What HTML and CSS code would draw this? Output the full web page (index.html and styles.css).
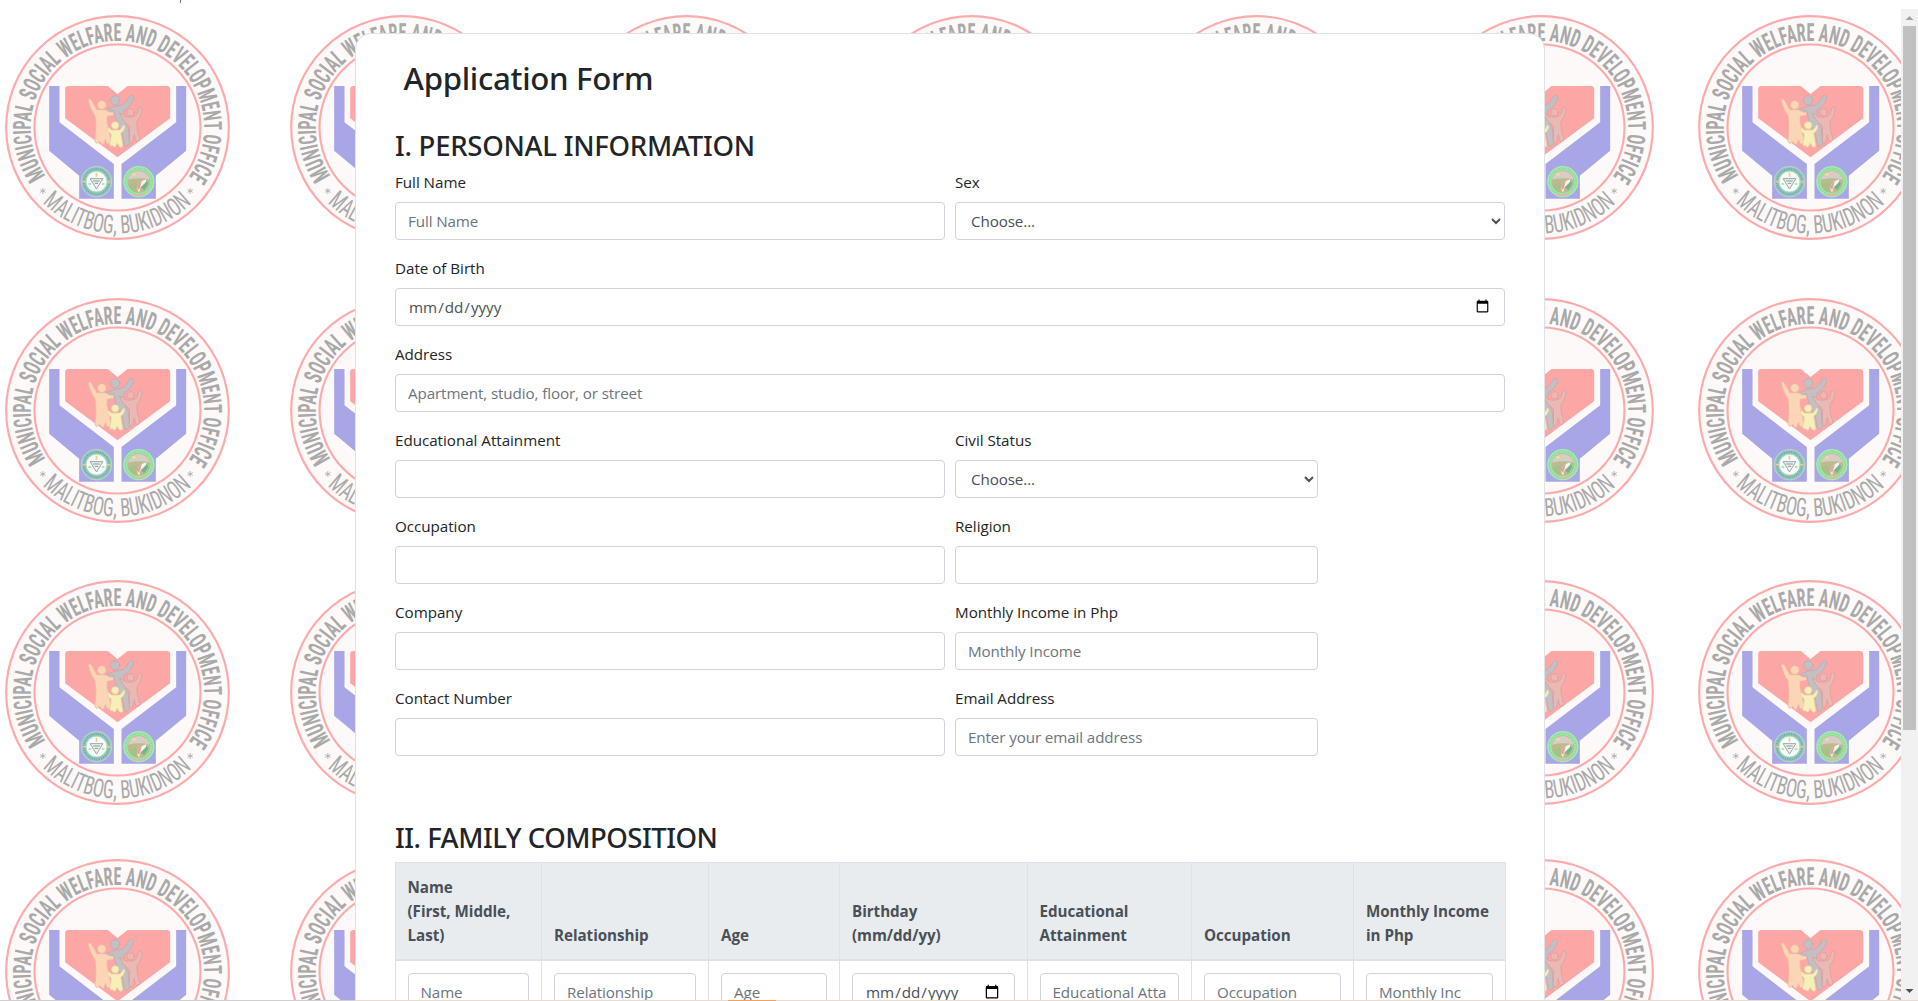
FILE: index.html
```html
<!DOCTYPE html>
<html lang="en">
<head>
<meta charset="utf-8">
<title>Application Form</title>
<link rel="stylesheet" href="styles.css">
</head>
<body>
<svg class="defs" width="0" height="0" aria-hidden="true">
  <defs>
    <path id="arc-top" d="M136.4 527.9 A260 260 0 1 1 566 530"/>
    <path id="arc-bottom" d="M127 608 A320 320 0 0 0 577 608"/>
    <symbol id="seal" viewBox="14.5 45 675 675">
      <circle cx="352" cy="382.5" r="334" fill="#fdf9f8" stroke="#fcabac" stroke-width="6.5"/>
      <circle cx="352" cy="382.5" r="249" fill="none" stroke="#fcabac" stroke-width="6.5"/>
      <text class="seal-office"><textPath href="#arc-top" textLength="1128" lengthAdjust="spacingAndGlyphs">MUNICIPAL SOCIAL WELFARE AND DEVELOPMENT OFFICE</textPath></text>
      <text class="seal-town"><textPath href="#arc-bottom" textLength="496" lengthAdjust="spacingAndGlyphs">MALITBOG, BUKIDNON</textPath></text>
      <g stroke="#a9a9a9" stroke-width="2.5">
        <path d="M128 564v18M120 569l16 8M120 577l16-8M570 564v18M562 569l16 8M562 577l16-8"/>
      </g>
      <path fill="#a8a6e6" d="M147 258h31v109l163 125v104H237v-69l-90-75zM528 258h30v194l-91 75v69H364V492l164-125z"/>
      <path fill="#fda6a6" d="M205 258H323L352 282 382 258H500q10 0 10 10V355L352 472 195 355V268q0-10 10-10z"/>
      <g stroke-width="2" stroke-linecap="round" stroke-linejoin="round">
        <g fill="#c3bfc3" stroke="#b5abaf">
          <path d="M312 330C330 328 338 318 352 317 368 318 378 308 387 290 391 284 401 286 400 293 397 310 386 322 372 330 368 350 376 370 384 385L388 430Q384 442 374 438L366 400 350 370 340 332Q326 336 312 330z"/>
          <circle cx="345" cy="301" r="14"/>
        </g>
        <g fill="#fbd5b5" stroke="#e8bb9e">
          <path d="M264 299Q272 293 277 306L290 329H316Q328 338 340 337V346L321 349Q318 366 325 385L333 424Q328 436 320 430L316 418 312 430Q306 438 302 428L298 424Q288 438 284 422 290 392 285 348 270 328 264 299z"/>
          <circle cx="305" cy="315" r="13"/>
        </g>
        <g fill="#e9bab5" stroke="#d99b96">
          <path d="M359 340Q367 340 374 350 388 354 400 350 412 348 414 328 416 320 422 321 427 324 424 338 420 356 410 366 409 390 419 416 416 428 408 424L402 404 398 424Q392 434 388 424V378Q366 362 359 340z"/>
          <circle cx="391" cy="337" r="11"/>
        </g>
        <g fill="#f6efb8" stroke="#e2d5a0">
          <path d="M321 383Q328 382 334 390H358Q366 386 369 376 375 374 374 382 371 394 362 400L368 438Q362 446 356 438L351 430 346 440Q338 444 337 436 328 442 329 430 334 412 333 402 322 394 321 383z"/>
          <circle cx="345" cy="376" r="11"/>
        </g>
      </g>
      <circle cx="289" cy="545" r="46" fill="#93c6c0" stroke="#d3dfc4" stroke-width="2"/>
      <circle cx="289" cy="545" r="38" fill="none" stroke="#76aca9" stroke-width="6" stroke-dasharray="4 3"/>
      <circle cx="289" cy="545" r="31" fill="#f5fbf8" stroke="#b4d9bd" stroke-width="2"/>
      <path d="M270 536h38l-19 31z" fill="#f0f3f1" stroke="#9aa5a3" stroke-width="3"/>
      <path d="M279 543h20M284 550h10" stroke="#87948f" stroke-width="3"/>
      <path d="M289 518v12M247 545h10M321 545h10" stroke="#edcf80" stroke-width="5"/>
      <path d="M265 552h8M305 552h8" stroke="#a6dba0" stroke-width="5"/>
      <circle cx="416" cy="545" r="46" fill="#9be8a8" stroke="#b4eeba" stroke-width="2"/>
      <circle cx="416" cy="545" r="40" fill="none" stroke="#88d597" stroke-width="5" stroke-dasharray="3 4"/>
      <circle cx="416" cy="545" r="34" fill="#bdb991"/>
      <path d="M383 539a34 34 0 0 1 66 0q-32-8-66 0z" fill="#d6cec5"/>
      <circle cx="401" cy="523" r="5" fill="#fbd79c"/>
      <path d="M385 556q14-14 28-2l-6 22q-16-4-22-20z" fill="#a8bf86"/>
      <path d="M411 566q0-20 28-28l-4 16-14 8-4 16z" fill="#f7f3ef"/>
      <path d="M411 564q2-14 14-20l-8 26z" fill="#ee9c95"/>
      <path d="M422 562l18-18 4 8-12 18z" fill="#69b98a"/>
      <path d="M396 582q20 8 40-2" fill="none" stroke="#e8b3a0" stroke-width="4"/>
    </symbol>
  </defs>
</svg>

<div class="window">
  <main class="page">
    <div class="backdrop" aria-hidden="true">
      <svg><use href="#seal"/></svg><svg><use href="#seal"/></svg><svg><use href="#seal"/></svg><svg><use href="#seal"/></svg><svg><use href="#seal"/></svg><svg><use href="#seal"/></svg><svg><use href="#seal"/></svg>
      <svg><use href="#seal"/></svg><svg><use href="#seal"/></svg><svg><use href="#seal"/></svg><svg><use href="#seal"/></svg><svg><use href="#seal"/></svg><svg><use href="#seal"/></svg><svg><use href="#seal"/></svg>
      <svg><use href="#seal"/></svg><svg><use href="#seal"/></svg><svg><use href="#seal"/></svg><svg><use href="#seal"/></svg><svg><use href="#seal"/></svg><svg><use href="#seal"/></svg><svg><use href="#seal"/></svg>
      <svg><use href="#seal"/></svg><svg><use href="#seal"/></svg><svg><use href="#seal"/></svg><svg><use href="#seal"/></svg><svg><use href="#seal"/></svg><svg><use href="#seal"/></svg><svg><use href="#seal"/></svg>
    </div>
    <span class="tick"></span>

    <form class="card">
      <h2 class="title">Application Form</h2>

      <h3 class="section section-personal">I. PERSONAL INFORMATION</h3>
      <div class="row">
        <div class="field half"><label for="name">Full Name</label><input class="control" id="name" type="text" placeholder="Full Name"></div>
        <div class="field half"><label for="sex">Sex</label><select class="control" id="sex"><option>Choose...</option></select></div>
      </div>
      <div class="row">
        <div class="field full"><label for="dob">Date of Birth</label><input class="control" id="dob" type="date"></div>
      </div>
      <div class="row">
        <div class="field full"><label for="address">Address</label><input class="control" id="address" type="text" placeholder="Apartment, studio, floor, or street"></div>
      </div>
      <div class="row">
        <div class="field half"><label for="education">Educational Attainment</label><input class="control" id="education" type="text"></div>
        <div class="field third"><label for="civil">Civil Status</label><select class="control" id="civil"><option>Choose...</option></select></div>
      </div>
      <div class="row">
        <div class="field half"><label for="occupation">Occupation</label><input class="control" id="occupation" type="text"></div>
        <div class="field third"><label for="religion">Religion</label><input class="control" id="religion" type="text"></div>
      </div>
      <div class="row">
        <div class="field half"><label for="company">Company</label><input class="control" id="company" type="text"></div>
        <div class="field third"><label for="income">Monthly Income in Php</label><input class="control" id="income" type="text" placeholder="Monthly Income"></div>
      </div>
      <div class="row">
        <div class="field half"><label for="contact">Contact Number</label><input class="control" id="contact" type="text"></div>
        <div class="field third"><label for="email">Email Address</label><input class="control" id="email" type="email" placeholder="Enter your email address"></div>
      </div>

      <h3 class="section section-family">II. FAMILY COMPOSITION</h3>
      <table class="family">
        <colgroup>
          <col class="col-name"><col class="col-relationship"><col class="col-age"><col class="col-birthday"><col class="col-education"><col class="col-occupation"><col class="col-income">
        </colgroup>
        <thead>
          <tr>
            <th>Name<br>(First, Middle, Last)</th>
            <th>Relationship</th>
            <th>Age</th>
            <th>Birthday<br>(mm/dd/yy)</th>
            <th>Educational<br>Attainment</th>
            <th>Occupation</th>
            <th>Monthly Income<br>in Php</th>
          </tr>
        </thead>
        <tbody>
          <tr>
            <td><input class="control" type="text" placeholder="Name"></td>
            <td><input class="control" type="text" placeholder="Relationship"></td>
            <td><input class="control" type="text" placeholder="Age"></td>
            <td><input class="control" type="date"></td>
            <td><input class="control" type="text" placeholder="Educational Attainment"></td>
            <td><input class="control" type="text" placeholder="Occupation"></td>
            <td><input class="control" type="text" placeholder="Monthly Inc"></td>
          </tr>
        </tbody>
      </table>
    </form>
  </main>

  <div class="scrollbar" aria-hidden="true">
    <svg class="arrow" viewBox="0 0 17 17"><path d="M4.500 11h8l-4-4z" fill="#a3a3a3"/></svg>
    <div class="thumb"></div>
    <svg class="arrow arrow-down" viewBox="0 0 17 17"><path d="M4.500 6h8l-4 4z" fill="#505050"/></svg>
  </div>
  <div class="edge" aria-hidden="true"></div>
</div>
</body>
</html>
```
FILE: styles.css
```css
*, *::before, *::after { box-sizing: border-box; }

body {
  margin: 0;
  height: 1001px;
  overflow: hidden;
  background: #fff;
  color: #212529;
  font: 400 15.2px/24px "Open Sans", "Noto Sans", sans-serif;
}

.defs { position: absolute; }

.window {
  position: relative;
  display: flex;
  width: 1918px;
  height: 1001px;
  overflow: hidden;
}

.page {
  position: relative;
  flex: 1;
  padding-top: 33px;
  overflow: hidden;
}

/* Repeating office seal behind the form */
.backdrop {
  position: absolute;
  inset: 0;
  display: grid;
  grid-template-columns: repeat(5, 284.8px) 269.4px 225px;
  grid-template-rows: 282.700px 282.700px 278.300px 225px;
  padding: 15px 0 0 4.800px;
}

.backdrop svg { width: 225px; height: 225px; }

.seal-office,
.seal-town {
  font-family: "Roboto", sans-serif;
  font-stretch: 75%;
  fill: #a9a9a9;
}

.seal-office { font-size: 75px; font-weight: 700; }
.seal-town { font-size: 76px; font-weight: 400; }

.tick {
  position: absolute;
  top: 0;
  left: 180px;
  width: 1px;
  height: 3px;
  background: #7068b8;
}

.card {
  position: relative;
  width: 1190px;
  height: 1100px;
  margin-left: 355px;
  padding: 25px 39px;
  background: #fff;
  border: 1px solid #dee2e6;
  border-radius: 16px;
}

h2, h3 {
  margin: 0;
  font-family: "Noto Sans", "Open Sans", sans-serif;
  font-weight: 500;
}

.title {
  padding-left: 8.5px;
  font-size: 31.2px;
  line-height: 38px;
  letter-spacing: -0.3px;
}

.section {
  margin-bottom: 7px;
  font-size: 27.5px;
  line-height: 34px;
  letter-spacing: -0.25px;
}

.section-personal { margin-top: 32px; }

.section-family {
  margin-top: 65px;
  letter-spacing: -0.49px;
}

.row {
  display: flex;
  margin: 0 -5px 16px;
}

.field { padding: 0 5px; }
.half { width: 50%; }
.third { width: 33.333%; }
.full { width: 100%; }

label {
  display: block;
  margin-bottom: 8px;
  letter-spacing: -0.03px;
}

.control {
  display: block;
  width: 100%;
  height: 38px;
  margin: 0;
  padding: 6px 12px;
  border: 1px solid #ced4da;
  border-radius: 4px;
  background: #fff;
  color: #495057;
  font: inherit;
}

.control::placeholder {
  color: #6c757d;
  opacity: 1;
  letter-spacing: -0.11px;
}

select.control {
  padding-right: 11px;
  padding-left: 11px;
  letter-spacing: -0.11px;
}

.family {
  width: 1110px;
  margin-left: -0.5px;
  border-collapse: collapse;
  table-layout: fixed;
}

.col-name { width: 146.500px; }
.col-relationship { width: 167px; }
.col-age { width: 131px; }
.col-birthday { width: 187.500px; }
.col-education { width: 164.500px; }
.col-occupation { width: 162px; }
.col-income { width: 151.500px; }

.family th,
.family td {
  padding: 12px;
  border: 1px solid #dee2e6;
  text-align: left;
}

.family th {
  border-bottom-width: 2px;
  background: #e9ecef;
  color: #495057;
  font-weight: 700;
  letter-spacing: -0.05px;
  vertical-align: bottom;
}

.scrollbar {
  display: flex;
  flex-direction: column;
  width: 17px;
  margin-top: 9px;
  background: #f1f1f1;
}

.arrow { display: block; width: 17px; height: 17px; }
.arrow-down { margin-top: auto; margin-bottom: 1px; }

.thumb {
  width: 13px;
  height: 704px;
  margin: 0 auto;
  background: #c1c1c1;
}

/* Hairline along the bottom of the window */
.edge {
  position: absolute;
  left: 0;
  right: 0;
  bottom: 0;
  height: 1px;
  background: linear-gradient(90deg, #cfcfcf 0 355px, #e6dcd2 355px 728px, #f2a25c 728px 776px, #e6dcd2 776px);
}
```
